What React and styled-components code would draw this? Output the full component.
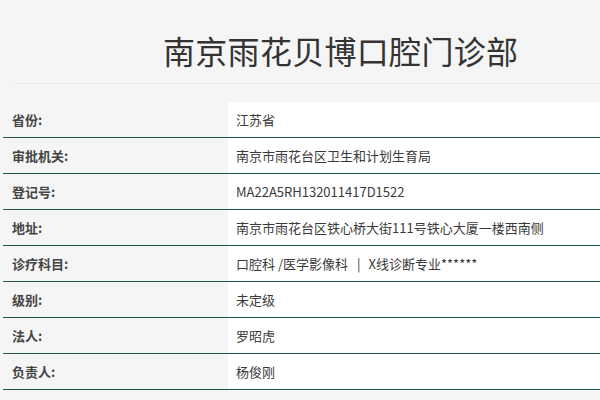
import React from 'react';
import styled, { createGlobalStyle } from 'styled-components';

const GlobalStyle = createGlobalStyle`
  html, body {
    margin: 0;
    padding: 0;
    background: #f5f5f5;
  }

  body {
    font-family: "Noto Sans CJK SC", "Noto Sans", sans-serif;
    color: #333;
  }
`;

const Page = styled.div`
  width: 600px;
  height: 400px;
  overflow: hidden;
`;

const Header = styled.div`
  margin-left: 15px;
  height: 84px;
  border-bottom: 1px solid #e6e6e6;
  box-sizing: border-box;
  padding: 30px 0 0 148px;

  h1 {
    margin: 0;
    font-size: 32px;
    font-weight: normal;
    line-height: 40px;
    color: #333;
    letter-spacing: 0.3px;
  }
`;

const InfoTable = styled.div`
  margin: 18px 0 0 3px;
  display: grid;
  grid-template-columns: 225px 1fr;
`;

const Row = styled.div`
  display: contents;

  > div {
    height: 35px;
    border-bottom: 1px solid #1d5a3c;
    display: flex;
    align-items: center;
    font-size: 13px;
  }
`;

const Label = styled.div`
  padding-left: 9px;
  font-weight: bold;
  color: #444;
`;

const Value = styled.div`
  padding-left: 8px;
  background: #fff;
  color: #3a3a3a;
  white-space: pre;
`;

const Divider = styled.span`
  padding: 0 8px 0 9px;
`;

const rows = [
  { label: '省份:', value: ['江苏省'] },
  { label: '审批机关:', value: ['南京市雨花台区卫生和计划生育局'] },
  { label: '登记号:', value: ['MA22A5RH132011417D1522'] },
  { label: '地址:', value: ['南京市雨花台区铁心桥大街111号铁心大厦一楼西南侧'] },
  { label: '诊疗科目:', value: ['口腔科 /医学影像科', 'X线诊断专业******'] },
  { label: '级别:', value: ['未定级'] },
  { label: '法人:', value: ['罗昭虎'] },
  { label: '负责人:', value: ['杨俊刚'] }
];

function App() {
  return (
    <Page>
      <GlobalStyle />
      <Header>
        <h1>南京雨花贝博口腔门诊部</h1>
      </Header>
      <InfoTable>
        {rows.map(row => (
          <Row key={row.label}>
            <Label>{row.label}</Label>
            <Value>
              {row.value.map((part, i) => (
                <React.Fragment key={part}>
                  {i > 0 && <Divider>|</Divider>}
                  {part}
                </React.Fragment>
              ))}
            </Value>
          </Row>
        ))}
      </InfoTable>
    </Page>
  );
}

export default App;
